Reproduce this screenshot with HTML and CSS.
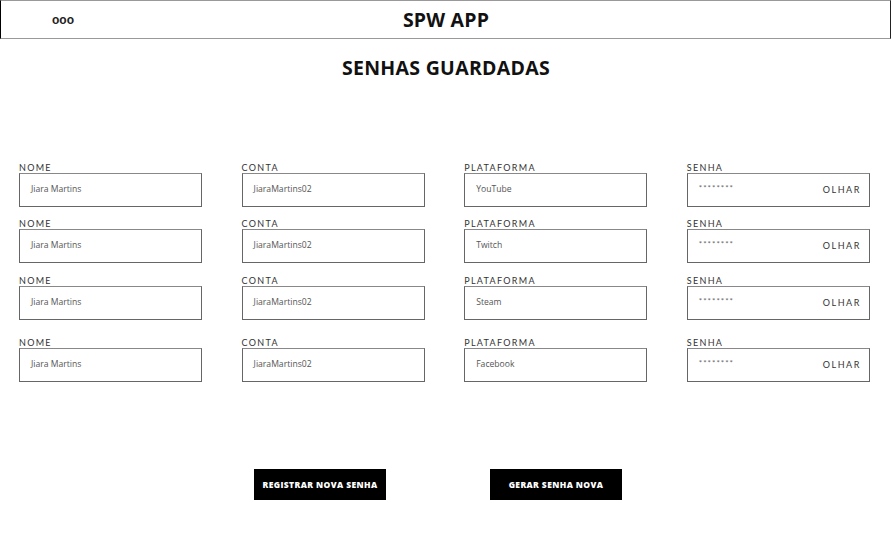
FILE: index.html
```html
<!DOCTYPE html>
<html lang="pt">
<head>
<meta charset="utf-8">
<title>SPW APP</title>
<link rel="stylesheet" href="styles.css">
</head>
<body>
<header class="topbar">
  <span class="menu">ooo</span>
  <h1 class="app-title">SPW APP</h1>
</header>
<main>
  <h2 class="page-title">SENHAS GUARDADAS</h2>
  <section class="grid">
    <div class="field"><label>NOME</label><div class="box">Jiara Martins</div></div>
    <div class="field"><label>CONTA</label><div class="box">JiaraMartins02</div></div>
    <div class="field"><label>PLATAFORMA</label><div class="box">YouTube</div></div>
    <div class="field"><label>SENHA</label><div class="box pw"><span class="stars">********</span><span class="look">OLHAR</span></div></div>

    <div class="field"><label>NOME</label><div class="box">Jiara Martins</div></div>
    <div class="field"><label>CONTA</label><div class="box">JiaraMartins02</div></div>
    <div class="field"><label>PLATAFORMA</label><div class="box">Twitch</div></div>
    <div class="field"><label>SENHA</label><div class="box pw"><span class="stars">********</span><span class="look">OLHAR</span></div></div>

    <div class="field third"><label>NOME</label><div class="box">Jiara Martins</div></div>
    <div class="field third"><label>CONTA</label><div class="box">JiaraMartins02</div></div>
    <div class="field third"><label>PLATAFORMA</label><div class="box">Steam</div></div>
    <div class="field third"><label>SENHA</label><div class="box pw"><span class="stars">********</span><span class="look">OLHAR</span></div></div>

    <div class="field last"><label>NOME</label><div class="box">Jiara Martins</div></div>
    <div class="field last"><label>CONTA</label><div class="box">JiaraMartins02</div></div>
    <div class="field last"><label>PLATAFORMA</label><div class="box">Facebook</div></div>
    <div class="field last"><label>SENHA</label><div class="box pw"><span class="stars">********</span><span class="look">OLHAR</span></div></div>
  </section>
  <div class="actions">
    <button class="btn">REGISTRAR NOVA SENHA</button>
    <button class="btn">GERAR SENHA NOVA</button>
  </div>
</main>
</body>
</html>
```
FILE: styles.css
```css
* { box-sizing: border-box; }
html, body { margin: 0; padding: 0; background: #fff; }
body { font-family: "Open Sans", "Noto Sans", sans-serif; color: #111; width: 892px; }

.topbar {
  height: 39px;
  width: 891px;
  border: 1px solid #999;
  border-left-color: #000;
  border-right-color: #222;
  display: flex;
  align-items: center;
  position: relative;
}
.menu {
  position: absolute;
  left: 51px;
  top: 12px;
  font-family: "Liberation Sans", sans-serif;
  font-size: 12px;
  font-weight: bold;
  color: #222;
}
.app-title {
  margin: 0 auto;
  font-size: 19.5px;
  font-weight: 700;
  padding-left: 1px;
  letter-spacing: 0.2px;
  line-height: 1;
}

.page-title {
  margin: 16px 0 0;
  text-align: center;
  font-size: 19.5px;
  font-weight: 700;
  line-height: 26px;
  letter-spacing: 0.3px;
}

.grid {
  margin: 82px 0 0 19px;
  display: grid;
  grid-template-columns: repeat(4, 183px);
  column-gap: 39.6px;
  row-gap: 12px;
}
.field { display: flex; flex-direction: column; }
.field.third { margin-top: 1px; }
.field.last { margin-top: 6px; }
.field label {
  font-family: "Lato", "Noto Sans", sans-serif;
  font-size: 9px;
  letter-spacing: 1.3px;
  color: #333;
  line-height: 10px;
  height: 10px;
}
.box {
  height: 34px;
  border: 1px solid #666;
  border-top-color: #888;
  padding: 0 10px 3px 11px;
  font-family: "Open Sans", "Noto Sans", sans-serif;
  font-size: 8.6px;
  color: #555;
  display: flex;
  align-items: center;
}
.box.pw { justify-content: space-between; }
.stars {
  font-family: "Lato", sans-serif;
  font-size: 8px;
  color: #666;
  letter-spacing: 1px;
  margin-top: -2px;
}
.look {
  font-family: "Lato", "Noto Sans", sans-serif;
  letter-spacing: 1.5px;
  color: #333;
  font-size: 9px;
  padding-top: 2px;
  margin-right: -2px;
}

.actions {
  margin: 87px 0 0 254px;
  display: flex;
  gap: 104px;
}
.btn {
  width: 132px;
  height: 31px;
  background: #000;
  color: #fff;
  border: none;
  font-family: "Open Sans", sans-serif;
  font-weight: 800;
  font-size: 8.5px;
  letter-spacing: 0.4px;
  padding: 0;
}
```
